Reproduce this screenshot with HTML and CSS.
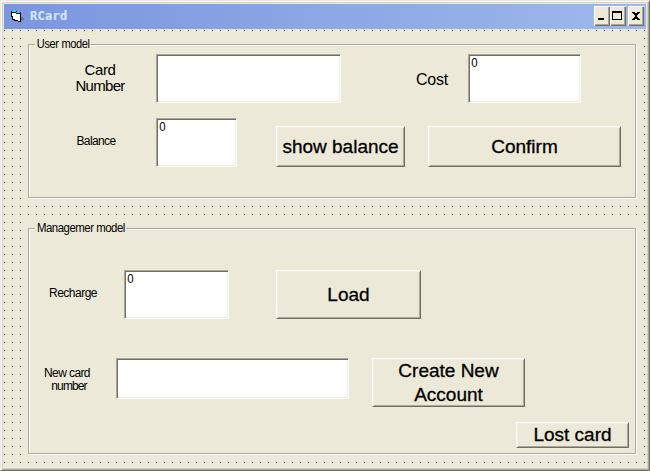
FILE: index.html
```html
<!DOCTYPE html>
<html lang="en">
<head>
<meta charset="utf-8">
<title>RCard</title>
<link rel="stylesheet" href="styles.css">
</head>
<body>
<div class="window">
  <header class="titlebar">
    <svg class="app-icon" width="16" height="16" viewBox="0 0 16 16" shape-rendering="crispEdges">
      <path fill="#65718f" d="M12 7h2v1h1v2h-2v1h-1z"/>
      <path fill="#000" d="M2 1h6v1h4v10H9v-1H5v-1H3V7H2z"/>
      <path fill="#0ff" d="M3 1h4v1H3zM7 2h4v1H7z"/>
      <path fill="#fff" d="M3 3h4v1h4v7H9v-1H6V9H4V6H3z"/>
    </svg>
    <h1 class="title">RCard</h1>
    <div class="controls">
      <button class="ctl" aria-label="Minimize"><svg width="16" height="20" shape-rendering="crispEdges"><path d="M4 12h6v2H4z"/></svg></button>
      <button class="ctl" aria-label="Maximize"><svg width="16" height="20" shape-rendering="crispEdges"><path fill-rule="evenodd" d="M2 5h10v9H2zM3 7v6h8V7z"/></svg></button>
      <button class="ctl close" aria-label="Close"><svg width="16" height="20" shape-rendering="crispEdges"><path d="M4 6h3v1h2V6h3v1h-1v1h-1v1H9v2h1v1h1v1h1v1H9v-1H7v1H4v-1h1v-1h1v-1h1V9H6V8H5V7H4z"/></svg></button>
    </div>
  </header>
  <main class="form">
    <section class="group user">
      <h2 class="legend"><span class="user-title">User model</span></h2>
      <div class="row first">
        <label class="label large card-label">Card<br><span class="tight">Number</span></label>
        <div class="field card-field"></div>
        <label class="label large cost-label">Cost</label>
        <div class="field cost-field"><span class="digit">0</span></div>
      </div>
      <div class="row second">
        <label class="label balance-label">Balance</label>
        <div class="field balance-field"><span class="digit">0</span></div>
        <button class="btn show">show balance</button>
        <button class="btn confirm">Confirm</button>
      </div>
    </section>
    <section class="group manager">
      <h2 class="legend"><span class="manager-title">Managemer model</span></h2>
      <div class="row third">
        <label class="label recharge-label">Recharge</label>
        <div class="field recharge-field"><span class="digit">0</span></div>
        <button class="btn load">Load</button>
      </div>
      <div class="row fourth">
        <label class="label new-label">New card<br><span class="second-line">number</span></label>
        <div class="field new-field"></div>
        <button class="btn create">Create New<br>Account</button>
      </div>
      <div class="row last"><button class="btn lost">Lost card</button></div>
    </section>
  </main>
</div>
</body>
</html>
```
FILE: styles.css
```css
* { box-sizing: border-box; }
body { margin: 0; background: #ece9d8; font-family: "Liberation Sans", Arial, sans-serif; color: #000; }
button { font-family: inherit; color: inherit; }
.window {
  width: 650px; height: 471px; padding: 2px 1px 1px 2px; overflow: hidden;
  background: #ece9d8;
  border: 1px solid; border-color: #ece9d8 #716f64 #716f64 #ece9d8;
  box-shadow: inset 1px 1px #fff, inset -1px -1px #aca899, inset 2px 2px #d4d0c8, inset -2px -2px #d4d0c8;
}
.titlebar {
  display: flex; align-items: flex-start; width: 642px; height: 25px; margin: 1px 0 0 1px; padding: 2px 2px 0 5px;
  background: linear-gradient(90deg, #7a96df, #9db9eb);
}
.app-icon { margin-top: 4px; }
.title { margin: 3px 0 0 5px; font: bold 12px/14px "DejaVu Sans Mono", monospace; letter-spacing: .3px; color: #d8e4f8; -webkit-text-stroke: .2px #d8e4f8; }
.controls { display: flex; margin-left: auto; }
.ctl {
  width: 16px; height: 20px; padding: 0; background: #ece9d8; border: 0;
  box-shadow: inset 1px 1px #fff, inset -1px -1px #716f64, inset -2px -2px #aca899;
}
.ctl svg { display: block; }
.close { margin-left: 2px; }
.form {
  width: 643px; height: 437px; margin-left: 1px; padding: 8px 0 0 24px;
  background: conic-gradient(from 0deg at 1px 1px, transparent 270deg, #000 0) 0 1px / 8px 8px;
}
.group { position: relative; width: 609px; background: #ece9d8; }
.group::before { content: ""; position: absolute; z-index: 0; inset: 7px 1px 1px 0; border: 1px solid #aca899; box-shadow: 1px 1px #fff, inset 1px 1px #fff; }
.user { height: 162px; }
.manager { height: 234px; margin-top: 22px; }
.legend { position: relative; margin: 0; height: 17px; padding-left: 7px; font: 12px/15px "Liberation Sans", sans-serif; white-space: nowrap; }
.legend span { display: inline-block; padding: 0 1px 0 2px; background: #ece9d8; transform-origin: 0 0; }
.user-title { letter-spacing: -.4px; transform: scaleX(.92); }
.manager-title { letter-spacing: -.5px; transform: scaleX(.95); }
.row { position: relative; display: flex; align-items: flex-start; }
.label { flex: none; text-align: center; font-size: 12px; line-height: 13px; letter-spacing: -.6px; white-space: nowrap; }
.large { font-size: 15px; line-height: 16px; letter-spacing: -.4px; }
.tight { letter-spacing: -.7px; }
.field {
  flex: none; height: 49px; padding: 2px; background: #fff; font-size: 12px; line-height: 13px;
  border: 1px solid; border-color: #aca899 #fff #fff #aca899;
  box-shadow: inset 1px 1px #716f64, inset -1px -1px #f1efe2;
}
.digit { display: inline-block; transform: scaleX(.95); }
.btn {
  flex: none; height: 41px; padding: 0; background: #ece9d8; border: 1px solid;
  border-color: #fff #716f64 #716f64 #fff;
  box-shadow: inset 1px 1px #f1efe2, inset -1px -1px #aca899;
  font-size: 19px; line-height: 24px; white-space: nowrap; -webkit-text-stroke: .3px #000;
}
.card-label { width: 56px; margin: 8px 0 0 44px; }
.card-field { width: 185px; margin-left: 28px; }
.cost-label { width: 34px; margin: 18px 0 0 74px; font-size: 16px; letter-spacing: -.2px; }
.cost-field { width: 113px; margin-left: 19px; }
.second { margin-top: 15px; }
.balance-label { width: 40px; margin: 17px 0 0 48px; }
.balance-field { width: 81px; margin-left: 40px; }
.show { width: 129px; margin: 8px 0 0 39px; }
.confirm { width: 193px; margin: 8px 0 0 23px; }
.third { margin-top: 32px; }
.recharge-label { width: 50px; margin: 17px 0 0 20px; letter-spacing: -.5px; }
.recharge-field { width: 105px; margin-left: 26px; }
.load { width: 145px; height: 49px; margin-left: 47px; }
.fourth { margin-top: 39px; }
.new-label { width: 50px; margin: 9px 0 0 14px; }
.second-line { margin-left: 4px; letter-spacing: -.9px; }
.new-field { width: 233px; height: 41px; margin-left: 24px; }
.create { width: 153px; height: 49px; margin-left: 23px; }
.last { margin-top: 15px; justify-content: flex-end; padding-right: 8px; }
.lost { width: 113px; height: 26px; }
```
